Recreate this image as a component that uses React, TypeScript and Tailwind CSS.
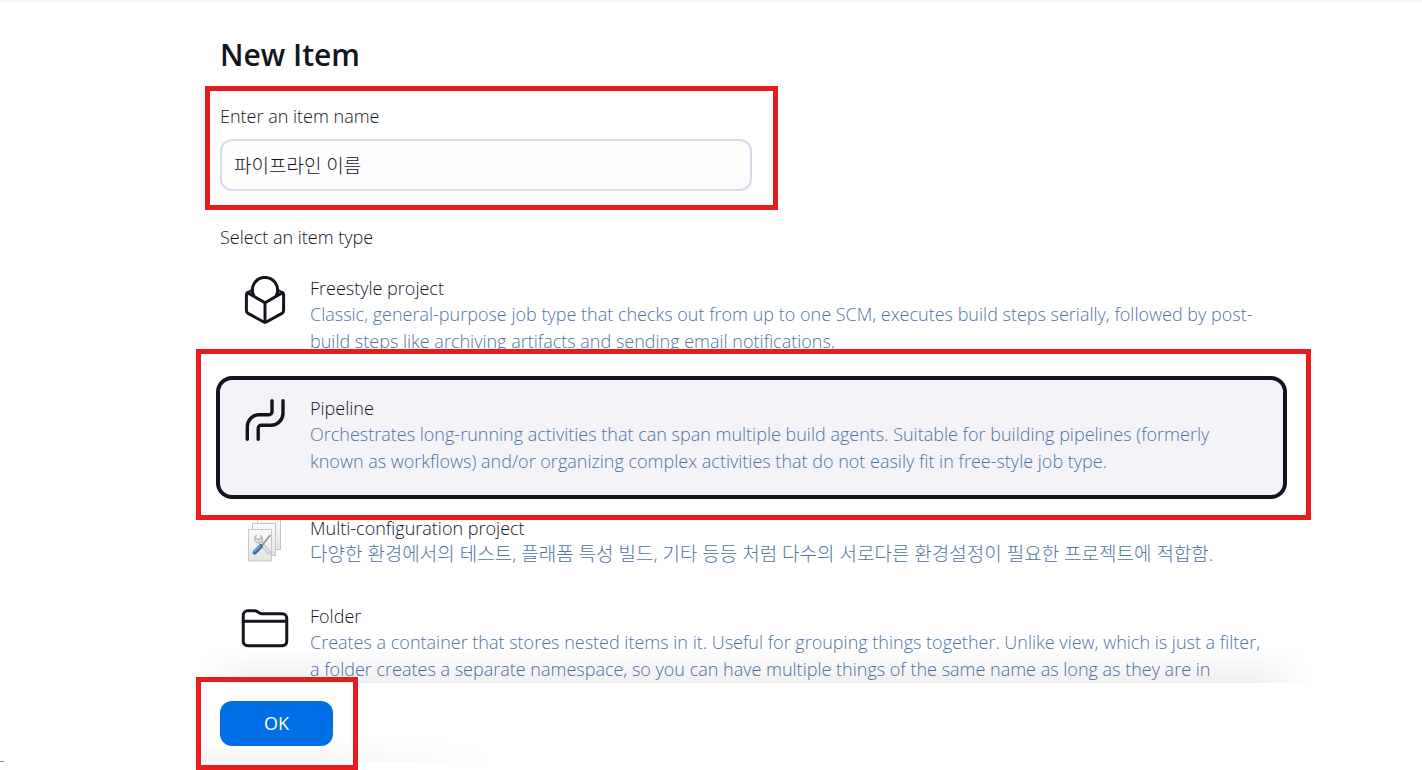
import { useState, type ReactNode } from 'react'

interface ItemType {
  id: string
  title: string
  description: string
  icon: ReactNode
  korean?: boolean
}

function FreestyleIcon() {
  return (
    <svg viewBox="0 0 48 48" className="size-12" fill="none" stroke="#14141f" strokeWidth="3" strokeLinecap="round" strokeLinejoin="round" aria-hidden="true">
      <path d="M12.6 19.4A12.6 12.6 0 1 1 35.4 19.4" />
      <path d="M24 26.8 6.4 16.6Q5.4 17.6 5.4 19V34.4Q5.4 36.4 7.1 37.4L22.3 45.8Q24 46.8 25.7 45.8L40.9 37.4Q42.6 36.4 42.6 34.4V19Q42.6 17.6 41.6 16.6Z" />
      <path d="M24 26.8V46" />
      <path d="M6.4 16.6 11.4 13.6 12.4 19ZM41.6 16.6 36.6 13.6 35.6 19Z" strokeWidth="2" />
    </svg>
  )
}

function PipelineIcon() {
  return (
    <svg viewBox="0 0 48 48" className="size-12" fill="none" stroke="#14141f" strokeWidth="3.4" strokeLinecap="round" aria-hidden="true">
      <path d="M6.3 43.3V30.7a12 12 0 0 1 12-12H28a3 3 0 0 0 3-3V4.7" />
      <path d="M17.2 43.3V32.3a3 3 0 0 1 3-3H30a12 12 0 0 0 12-12V4.7" />
    </svg>
  )
}

function MultiConfigIcon() {
  return (
    <svg viewBox="0 0 48 48" className="size-12" fill="none" aria-hidden="true">
      <defs>
        <linearGradient id="sheet" x1="0" y1="0" x2="0" y2="1">
          <stop offset="0" stopColor="#fbfbfb" />
          <stop offset="1" stopColor="#e4e4e2" />
        </linearGradient>
      </defs>
      <g fill="url(#sheet)" stroke="#c6c7c3">
        <rect x="16.5" y="1.5" width="23" height="32" />
        <rect x="11.5" y="7.5" width="23" height="32" />
        <rect x="7.5" y="13.5" width="23" height="31.5" />
      </g>
      <path d="M17.5 24.5 28 36.5" stroke="#b0b2b0" strokeWidth="4" strokeLinecap="round" />
      <path d="M17.5 24.5 28 36.5" stroke="#e3e4e2" strokeWidth="2.4" strokeLinecap="round" />
      <path d="M15.7 19.3A4 4 0 1 0 19.8 19.6L20.4 22.4 17.2 23.6 14.1 21.5" fill="#e3e4e2" stroke="#b0b2b0" strokeWidth="1.1" />
      <path d="M28.8 19.7 20.4 30.2" stroke="#8fa3b8" strokeWidth="2" strokeLinecap="round" />
      <path d="M19.8 30.3 13.8 36.4" stroke="#3f72b3" strokeWidth="4.4" strokeLinecap="round" />
      <path d="M19 30 13.2 35.6" stroke="#8aaed8" strokeWidth="1.2" strokeLinecap="round" />
    </svg>
  )
}

function FolderIcon() {
  return (
    <svg viewBox="0 0 512 512" className="size-12" fill="none" stroke="#14141f" strokeWidth="32" strokeLinecap="round" strokeLinejoin="round" aria-hidden="true">
      <path d="M440 446H72a48 48 0 0 1-48-48V120a48 48 0 0 1 48-48h75.89a40 40 0 0 1 22.19 6.72l27.84 18.56a40 40 0 0 0 22.19 6.72H440a48 48 0 0 1 48 48v246a48 48 0 0 1-48 48zM24 184h464" />
    </svg>
  )
}

const ITEM_TYPES: ItemType[] = [
  {
    id: 'freestyle',
    title: 'Freestyle project',
    description:
      'Classic, general-purpose job type that checks out from up to one SCM, executes build steps serially, followed by post-build steps like archiving artifacts and sending email notifications.',
    icon: <FreestyleIcon />,
  },
  {
    id: 'pipeline',
    title: 'Pipeline',
    description:
      'Orchestrates long-running activities that can span multiple build agents. Suitable for building pipelines (formerly known as workflows) and/or organizing complex activities that do not easily fit in free-style job type.',
    icon: <PipelineIcon />,
  },
  {
    id: 'multi-configuration',
    title: 'Multi-configuration project',
    description: '다양한 환경에서의 테스트, 플래폼 특성 빌드, 기타 등등 처럼 다수의 서로다른 환경설정이 필요한 프로젝트에 적합함.',
    icon: <MultiConfigIcon />,
    korean: true,
  },
  {
    id: 'folder',
    title: 'Folder',
    description:
      'Creates a container that stores nested items in it. Useful for grouping things together. Unlike view, which is just a filter, a folder creates a separate namespace, so you can have multiple things of the same name as long as they are in',
    icon: <FolderIcon />,
  },
]

// Red frame laid over the step the reader should look at
function Highlight({ className }: { className: string }) {
  return <span aria-hidden="true" className={`pointer-events-none absolute z-20 border-5 border-[#e81c1c] ${className}`} />
}

export default function App() {
  const [name, setName] = useState('파이프라인 이름')
  const [selected, setSelected] = useState('pipeline')

  return (
    <form
      onSubmit={e => e.preventDefault()}
      className="flex h-screen flex-col overflow-hidden border-t-2 border-[#f6f6f8] bg-white font-['Open_Sans','Noto_Sans_CJK_KR',sans-serif] text-[18px] font-light text-[#14141f]"
    >
      <main className="min-h-0 flex-1 overflow-hidden pt-8 pr-[139px] pl-[220px]">
        <h1 className="text-[30px] leading-[42px] font-semibold">New Item</h1>

        <div className="relative mt-[27px] w-1/2">
          <label htmlFor="item-name" className="block leading-[27px]">Enter an item name</label>
          <input
            id="item-name"
            value={name}
            onChange={e => setName(e.target.value)}
            className="mt-[9px] block h-13 w-full rounded-xl border-2 border-[#d6dce9] bg-[#fdfdfe] px-3 text-[19px] outline-none"
          />
          <Highlight className="-top-[17px] -right-[26px] -bottom-[19px] -left-[15px]" />
        </div>

        <fieldset className="mt-[33px]">
          <legend className="leading-[27px]">Select an item type</legend>
          <div className="mt-[9px] flex flex-col gap-[5px]">
            {ITEM_TYPES.map(item => (
              <div key={item.id} className="relative">
                <label
                  className={`flex gap-[21px] rounded-xl px-[21px] pt-4 ${item.korean ? 'pb-4' : 'pb-5'} ${
                    selected === item.id ? 'bg-[#f3f3f8] ring-4 ring-[#14141f]' : ''
                  }`}
                >
                  <input
                    type="radio"
                    name="item-type"
                    className="sr-only"
                    checked={selected === item.id}
                    onChange={() => setSelected(item.id)}
                  />
                  <span className="shrink-0">{item.icon}</span>
                  <span className="min-w-0">
                    <span className="block leading-[25px]">{item.title}</span>
                    <span className={`block text-[#4f74a4] ${item.korean ? 'text-[19px] leading-[26px]' : 'leading-[27px]'}`}>
                      {item.description}
                    </span>
                  </span>
                </label>
                {item.id === 'pipeline' && <Highlight className="-top-[31px] -right-7 -bottom-[25px] -left-6" />}
              </div>
            ))}
          </div>
        </fieldset>
      </main>

      <footer className="relative shrink-0 pt-[18px] pr-[139px] pb-6 pl-[220px]">
        <span
          aria-hidden="true"
          className="pointer-events-none absolute right-[111px] bottom-full left-[196px] h-9 bg-linear-to-t from-black/6 to-transparent mask-r-from-95% mask-l-from-95%"
        />
        <span
          aria-hidden="true"
          className="pointer-events-none absolute bottom-2 left-[196px] h-6 w-[300px] bg-linear-to-t from-black/4 to-transparent mask-r-from-40%"
        />
        <span aria-hidden="true" className="absolute bottom-2 left-0 h-px w-1 bg-[#8a8a8a]" />
        <div className="relative w-fit">
          <button type="submit" className="h-[45px] rounded-xl bg-[#006fe6] px-11 font-normal text-white">
            OK
          </button>
          <Highlight className="-top-6 -right-[25px] -bottom-6 -left-6" />
        </div>
      </footer>
    </form>
  )
}
